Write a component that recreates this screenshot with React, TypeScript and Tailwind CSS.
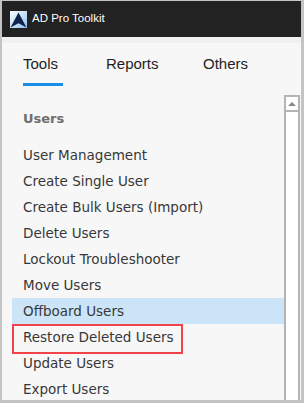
import React from 'react';

const items = [
  'User Management',
  'Create Single User',
  'Create Bulk Users (Import)',
  'Delete Users',
  'Lockout Troubleshooter',
  'Move Users',
  'Offboard Users',
  'Restore Deleted Users',
  'Update Users',
  'Export Users',
];

function Logo() {
  return (
    <svg width="17" height="17" viewBox="0 0 16 16">
      <defs>
        <linearGradient id="lg" x1="0" y1="0" x2="1" y2="1">
          <stop offset="0" stopColor="#ffffff" />
          <stop offset="1" stopColor="#8fc3ec" />
        </linearGradient>
      </defs>
      <rect width="16" height="16" fill="url(#lg)" />
      <path d="M8 1.5 L15.5 15.5 L8 11.5 L0.5 15.5 Z" fill="#10234f" />
    </svg>
  );
}

export default function App() {
  return (
    <div className="w-[304px] h-[403px] bg-[#c4c4c4] pt-px pl-[2px] pr-[3px] pb-[3px] overflow-hidden" style={{ fontFamily: 'Tahoma, "DejaVu Sans", sans-serif' }}>
      <div className="h-full flex flex-col bg-[#f7f7f7]">
        {/* Title bar */}
        <div className="h-[36px] bg-[#222222] flex items-center gap-[5px] pl-[8px] shrink-0">
          <Logo />
          <span className="text-white text-[11.5px]" style={{ fontFamily: '"Liberation Sans", Arial, sans-serif' }}>AD Pro Toolkit</span>
        </div>
        <div className="h-[6px] bg-[#f0f0f0] shrink-0" />

        {/* Tabs */}
        <div className="flex pl-[21px] pt-[12px] h-[52px] shrink-0 text-[15px] text-[#1e1e1e]" style={{ fontFamily: '"Liberation Sans", Arial, sans-serif' }}>
          <div className="flex flex-col items-start w-[83px]">
            <span className="leading-[18px]">Tools</span>
            <div className="mt-[10px] h-[3px] w-[40px] bg-[#1890ea]" />
          </div>
          <span className="leading-[18px] w-[97px]">Reports</span>
          <span className="leading-[18px]">Others</span>
        </div>

        {/* Content */}
        <div className="flex flex-1 min-h-0">
          <div className="flex-1 pl-[10px]">
            <div className="h-[47px] flex items-center pl-[11px] text-[13px] font-bold text-[#6e6e6e]">Users</div>
            {items.map((it) => {
              const sel = it === 'Offboard Users';
              const boxed = it === 'Restore Deleted Users';
              return (
                <div key={it} className={`relative h-[26px] flex items-center pl-[11px] ${sel ? 'bg-[#cce4f7]' : ''}`}>
                  <span className="text-[13.5px] text-[#383838] whitespace-nowrap">{it}</span>
                  {boxed && <div className="absolute left-0 top-0 w-[171px] h-[30px] border-2 border-[#f2434b]" />}
                </div>
              );
            })}
          </div>
          {/* Scrollbar */}
          <div className="w-[16px] mr-[1px] flex flex-col border-x-2 border-[#b4b4b4] bg-white shrink-0">
            <div className="h-[17px] border-b-2 border-t-2 border-[#b4b4b4] flex items-center justify-center">
              <div className="w-0 h-0 border-l-[4px] border-r-[4px] border-b-[4px] border-l-transparent border-r-transparent border-b-[#888]" />
            </div>
            <div className="flex-1" />
          </div>
        </div>
      </div>
    </div>
  );
}
